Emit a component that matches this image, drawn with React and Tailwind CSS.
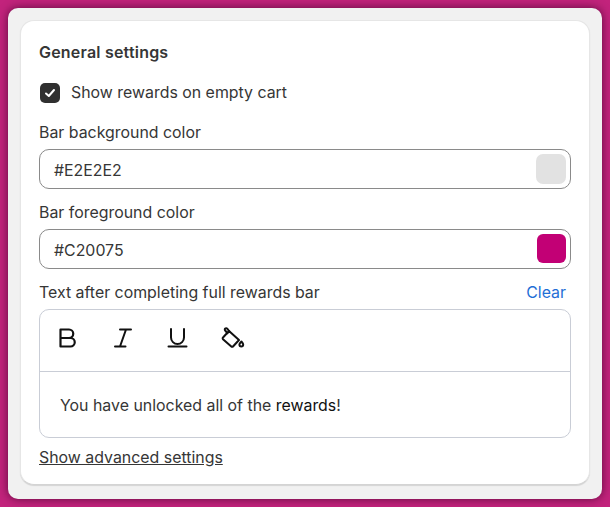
const font = "font-['Inter',sans-serif]";

const ColorField = ({ label, value, swatch }) => (
  <div>
    <div className="h-[17px] flex items-center text-[15.9px] leading-[17px] text-[#363636]">{label}</div>
    <div className="mt-[8px] h-[40px] flex items-center justify-between rounded-[10px] border border-[#8a8a8a] pl-[14px] pr-[4px]">
      <span className="pt-[4px] text-[15.9px] text-[#363636]">{value}</span>
      {swatch}
    </div>
  </div>
);

const Icon = ({ children, width = 2 }) => (
  <svg width="24" height="24" viewBox="0 0 24 24" fill="none" stroke="#111" strokeWidth={width} strokeLinejoin="round" strokeLinecap="round">
    {children}
  </svg>
);

export default function App() {
  return (
    <div className={`${font} w-[610px] h-[507px] overflow-hidden bg-[#c2237c] pt-[8px] px-[8px]`}>
      <div className="w-[594px] h-[491px] rounded-[10px] bg-[#f1f1f1] shadow-[0_0_10px_rgba(60,0,40,0.75)] pt-[12px] px-[12px]">
        <div className="w-[570px] h-[465px] rounded-[14px] bg-white border border-[#e6e6e6] border-b-[#d4d4d4] shadow-[0_1px_1px_rgba(0,0,0,0.12)] pt-[21px] px-[18px]">
          <h2 className="h-[20px] flex items-center text-[16px] tracking-[0.2px] font-semibold text-[#363636]">General settings</h2>

          <label className="mt-[19px] flex items-center gap-[11px] pl-px">
            <span className="w-[20px] h-[20px] rounded-[5px] bg-[#303030] flex items-center justify-center">
              <svg width="14" height="14" viewBox="0 0 14 14" fill="none" stroke="#fff" strokeWidth="2" strokeLinecap="round" strokeLinejoin="round">
                <path d="M3 7.500 5.800 10 11 4" />
              </svg>
            </span>
            <span className="text-[15.9px] text-[#363636]">Show rewards on empty cart</span>
          </label>

          <div className="mt-[19px]">
            <ColorField
              label="Bar background color"
              value="#E2E2E2"
              swatch={<span className="w-[30px] h-[30px] rounded-[7px] bg-[#e2e2e2]" />}
            />
          </div>
          <div className="mt-[15px]">
            <ColorField
              label="Bar foreground color"
              value="#C20075"
              swatch={<span className="w-[29px] h-[29px] rounded-[6px] bg-[#c20075]" />}
            />
          </div>

          <div className="mt-[15px] h-[18px] flex items-center justify-between pr-[5px]">
            <span className="text-[15.9px] text-[#363636]">Text after completing full rewards bar</span>
            <span className="text-[15.9px] text-[#1f6fd6]">Clear</span>
          </div>

          <div className="mt-[7px] h-[129px] rounded-[10px] border border-[#c9cdd6]">
            <div className="h-[62px] border-b border-[#c9cdd6] flex items-start gap-[31px] pl-[16px] pt-[16px]">
              <Icon width={2.2}>
                <path d="M4.500 3.500v17M4.500 3.500h8.500a4.200 4.200 0 0 1 0 8.500H4.500M4.500 12h10a4.250 4.250 0 0 1 0 8.500H4.500" />
              </Icon>
              <Icon width={2}>
                <path d="M9 3.500h11M4 20.500h10.500M15 3.500 9 20.500" />
              </Icon>
              <Icon width={2}>
                <path d="M5 3v8.500a6.500 6.500 0 0 0 13 0V3M2.500 20.500h18" />
              </Icon>
              <Icon width={2}>
                <path d="M2 11.500 8 5l10 9-6 6.500a1.200 1.200 0 0 1-1.700 0L2 13.200a1.200 1.200 0 0 1 0-1.700Z" />
                <path d="M8.500 5.500 6.200 2.600a1.300 1.300 0 0 0-2 0 1.300 1.300 0 0 0 0 1.900l2.300 2.800" />
                <path d="M20.400 15.500c1.100 1.300 1.800 2.200 1.800 3.100a1.900 1.900 0 0 1-3.800 0c0-.9.800-1.800 2-3.100Z" />
              </Icon>
            </div>
            <p className="pt-[25px] pl-[20px] text-[15.9px] leading-[18px] text-[#363636]">
              You have unlocked all of the <span className="text-[#111]">rewards</span>!
            </p>
          </div>

          <a className="mt-[11px] inline-block text-[15.9px] leading-[18px] text-[#363636] underline">Show advanced settings</a>
        </div>
      </div>
    </div>
  );
}
